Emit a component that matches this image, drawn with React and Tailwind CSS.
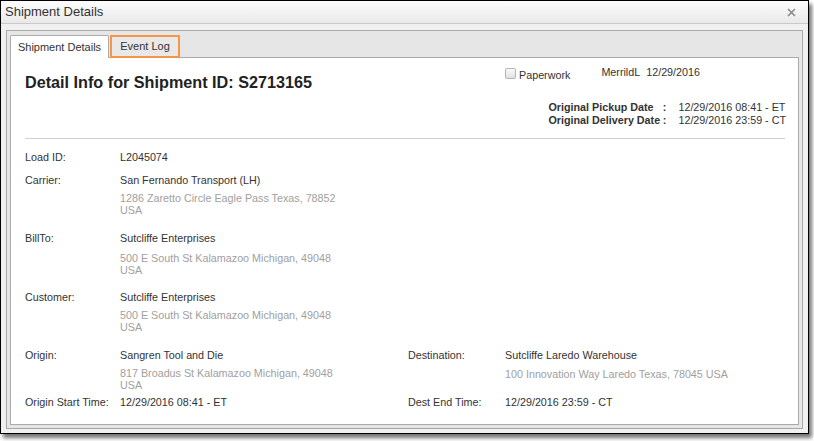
import React from 'react';

const addr = 'text-[#a0a0a0]';

function App() {
  return (
    <div className="w-[814px] h-[441px] bg-white font-['Liberation_Sans',Arial,sans-serif] text-[10.75px] text-[#333] leading-[12px]">
      <div className="w-[809px] h-[434px] border border-black bg-[#f0f0f0] flex flex-col shadow-[3px_4px_4px_rgba(0,0,0,0.55)]">
        {/* title bar */}
        <div className="h-[23px] shrink-0 flex items-center justify-between border-b border-[#c9c9c9] bg-gradient-to-b from-[#fdfdfd] to-[#e9e9e9] pl-[4px] pr-[12px]">
          <span className="text-[13px] leading-[16px] text-[#333]">Shipment Details</span>
          <svg width="9" height="9" viewBox="0 0 9 9" className="mt-[1px]">
            <path d="M1 1 L8 8 M8 1 L1 8" stroke="#8a8a8a" strokeWidth="1.6" />
          </svg>
        </div>

        {/* body */}
        <div className="flex-1 flex flex-col pt-[6px] px-[5px] pb-[4px]">
          <div className="flex-1 flex flex-col border border-[#a9a9a9] bg-[#e6e6e6] pt-[4px] px-[3px] pb-[3px]">
            {/* tabs */}
            <div className="flex h-[23px] shrink-0 relative z-10 -mb-px">
              <div className="w-[99px] flex items-center justify-center bg-white border border-b-0 border-[#aaaaaa] rounded-t-[2px]">
                <span className="leading-[13px] text-[11px]">Shipment Details</span>
              </div>
              <div className="ml-[1px] w-[70px] flex items-center justify-center bg-[#e8e8e8] border-2 border-[#f79646]">
                <span className="leading-[13px] text-[11px]">Event Log</span>
              </div>
            </div>

            {/* content */}
            <div className="flex-1 bg-white border border-[#aaaaaa] pl-[14px] pr-[13px]">
              <div className="h-[81px] flex justify-between border-b border-[#d0d0d0]">
                <h1 className="pt-[14px] text-[16.2px] leading-[20px] font-bold text-[#222] whitespace-nowrap">
                  Detail Info for Shipment ID: S2713165
                </h1>
                <div className="w-[285px] -mr-[3px] flex flex-col pt-[8px]">
                  <div className="flex items-start h-[14px] ml-[2px]">
                    <span className="mt-[2px] w-[11px] h-[11px] rounded-[2px] border border-[#b5b5b5] bg-gradient-to-b from-[#fafafa] to-[#e2e2e2]" />
                    <span className="ml-[3px] mt-[3px] leading-[12px]">Paperwork</span>
                    <span className="ml-[31px] leading-[12px]">MerrildL&nbsp;&nbsp;12/29/2016</span>
                  </div>
                  <div className="self-end mr-[2px] mt-[21px] grid grid-cols-[auto_auto] leading-[13px] whitespace-nowrap">
                    <div className="font-bold flex justify-between w-[120px] pr-[2px]">
                      <span>Original Pickup Date</span>
                      <span>:</span>
                    </div>
                    <div className="pl-[10px]">12/29/2016 08:41 - ET</div>
                    <div className="font-bold flex justify-between w-[120px] pr-[2px]">
                      <span>Original Delivery Date</span>
                      <span>:</span>
                    </div>
                    <div className="pl-[10px]">12/29/2016 23:59 - CT</div>
                  </div>
                </div>
              </div>

              <div className="mt-[12px] flex">
                <div className="w-[95px] shrink-0">Load ID:</div>
                <div>L2045074</div>
              </div>

              <div className="mt-[11px] flex">
                <div className="w-[95px] shrink-0">Carrier:</div>
                <div>
                  <div>San Fernando Transport (LH)</div>
                  <div className={'mt-[6px] ' + addr}>
                    1286 Zaretto Circle Eagle Pass Texas, 78852
                    <br />
                    USA
                  </div>
                </div>
              </div>

              <div className="mt-[16px] flex">
                <div className="w-[95px] shrink-0">BillTo:</div>
                <div>
                  <div>Sutcliffe Enterprises</div>
                  <div className={'mt-[8px] ' + addr}>
                    500 E South St Kalamazoo Michigan, 49048
                    <br />
                    USA
                  </div>
                </div>
              </div>

              <div className="mt-[15px] flex">
                <div className="w-[95px] shrink-0">Customer:</div>
                <div>
                  <div>Sutcliffe Enterprises</div>
                  <div className={'mt-[6px] ' + addr}>
                    500 E South St Kalamazoo Michigan, 49048
                    <br />
                    USA
                  </div>
                </div>
              </div>

              <div className="mt-[16px] grid grid-cols-[95px_288px_97px_1fr]">
                <div>Origin:</div>
                <div>Sangren Tool and Die</div>
                <div>Destination:</div>
                <div>Sutcliffe Laredo Warehouse</div>

                <div />
                <div className={'mt-[6px] ' + addr}>
                  817 Broadus St Kalamazoo Michigan, 49048
                  <br />
                  USA
                </div>
                <div />
                <div className={'mt-[7px] ' + addr}>100 Innovation Way Laredo Texas, 78045 USA</div>

                <div className="mt-[5px]">Origin Start Time:</div>
                <div className="mt-[5px]">12/29/2016 08:41 - ET</div>
                <div className="mt-[5px]">Dest End Time:</div>
                <div className="mt-[5px]">12/29/2016 23:59 - CT</div>
              </div>
            </div>
          </div>
        </div>
      </div>
    </div>
  );
}

export default App;
